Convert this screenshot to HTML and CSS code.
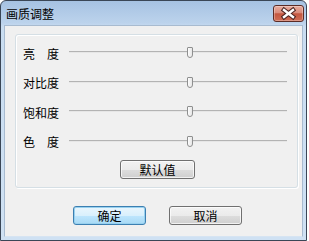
FILE: index.html
```html
<!DOCTYPE html>
<html lang="zh-CN">
<head>
    <meta charset="UTF-8">
    <title>画质调整</title>
    <link rel="stylesheet" href="styles.css">
</head>
<body>
    <div class="window">
        <div class="titlebar">
            <span class="title">画质调整</span>
            <div class="close">
                <svg width="29" height="15" viewBox="0 0 29 15">
                    <path d="M10 4 L19 11 M19 4 L10 11" stroke="#4b2320" stroke-width="4.5" stroke-linecap="square" fill="none"/>
                    <path d="M10 4 L19 11 M19 4 L10 11" stroke="#fff" stroke-width="2.4" stroke-linecap="square" fill="none"/>
                </svg>
            </div>
        </div>
        <div class="client">
            <div class="group">
                <div class="row">
                    <span class="label">亮　度</span>
                    <div class="slider"><div class="thumb"></div></div>
                </div>
                <div class="row">
                    <span class="label">对比度</span>
                    <div class="slider"><div class="thumb"></div></div>
                </div>
                <div class="row">
                    <span class="label">饱和度</span>
                    <div class="slider"><div class="thumb"></div></div>
                </div>
                <div class="row">
                    <span class="label">色　度</span>
                    <div class="slider"><div class="thumb"></div></div>
                </div>
                <div class="reset">
                    <button class="btn wide">默认值</button>
                </div>
            </div>
            <div class="actions">
                <button class="btn default">确定</button>
                <button class="btn">取消</button>
            </div>
        </div>
    </div>
</body>
</html>
```

FILE: styles.css
```css
body {
    margin: 0;
    background-color: #ffffff;
    font-family: "Noto Sans CJK SC", "DejaVu Sans", sans-serif;
    font-size: 12px;
    color: #000;
}

.window {
    width: 307px;
    height: 241px;
    box-sizing: border-box;
    border: 1px solid #3a4656;
    border-radius: 6px 6px 0 0;
    background: linear-gradient(#a6c2e2, #bcd3ec 22px, #c9ddf1 26px, #cfe1f3);
    padding: 0 3px 3px;
    display: flex;
    flex-direction: column;
}

.titlebar {
    height: 24px;
    display: flex;
    justify-content: space-between;
    align-items: flex-start;
}

.title {
    margin: 5px 0 0 2px;
    line-height: 16px;
}

.close {
    width: 31px;
    height: 17px;
    box-sizing: border-box;
    margin: 4px -1px 0 0;
    border: 1px solid #5b2b25;
    border-radius: 3px;
    background: linear-gradient(#e9ad9f, #d98b7b 45%, #c4563f 52%, #cf6d55);
    box-shadow: inset 0 0 0 1px rgba(255, 255, 255, 0.3);
}

.close svg {
    display: block;
}

.client {
    flex: 1;
    background-color: #f0f0f0;
    border: 1px solid #a8bbd0;
    border-bottom-color: #d6e4f2;
}

.group {
    width: 283px;
    height: 154px;
    box-sizing: border-box;
    margin: 8px 0 0 10px;
    padding: 4px 0 0 7px;
    border: 1px solid #d5dfe5;
    border-radius: 3px;
    box-shadow: inset 1px 1px 0 #fff, 1px 1px 0 #fff;
}

.row {
    height: 29.5px;
    display: flex;
    align-items: center;
}

.label {
    width: 46px;
    line-height: 14px;
}

.slider {
    width: 218px;
    height: 11px;
    margin-bottom: 2px;
    position: relative;
}

.slider::before {
    content: "";
    display: block;
    margin-top: 4px;
    height: 1px;
    background-color: #b3b3b3;
    border-bottom: 1px solid #e6e6e6;
}

.thumb {
    position: absolute;
    left: 118px;
    top: 0;
    width: 6px;
    height: 11px;
    box-sizing: border-box;
    border: 1px solid #8e8f8f;
    border-radius: 1px 1px 3px 3px;
    background: linear-gradient(90deg, #fdfdfd, #e6e6e6);
}

.reset {
    display: flex;
    justify-content: center;
    margin: 3px 5px 0 0;
}

.btn {
    width: 73px;
    height: 19px;
    box-sizing: border-box;
    padding: 0;
    font-family: inherit;
    font-size: 12px;
    line-height: 15px;
    color: #000;
    border: 1px solid #707070;
    border-radius: 3px;
    background: linear-gradient(#f2f2f2, #ebebeb 50%, #dddddd 51%, #cfcfcf);
    box-shadow: inset 0 0 0 1px rgba(255, 255, 255, 0.7);
}

.btn.wide {
    width: 75px;
}

.btn.default {
    border-color: #3c7fb1;
    background: linear-gradient(#eaf6fd, #d9f0fc 50%, #bee6fd 51%, #a7d9f5);
    box-shadow: inset 0 0 0 1px #98d1ef;
}

.actions {
    display: flex;
    justify-content: center;
    gap: 23px;
    margin-top: 18px;
    padding-left: 8px;
}
```
